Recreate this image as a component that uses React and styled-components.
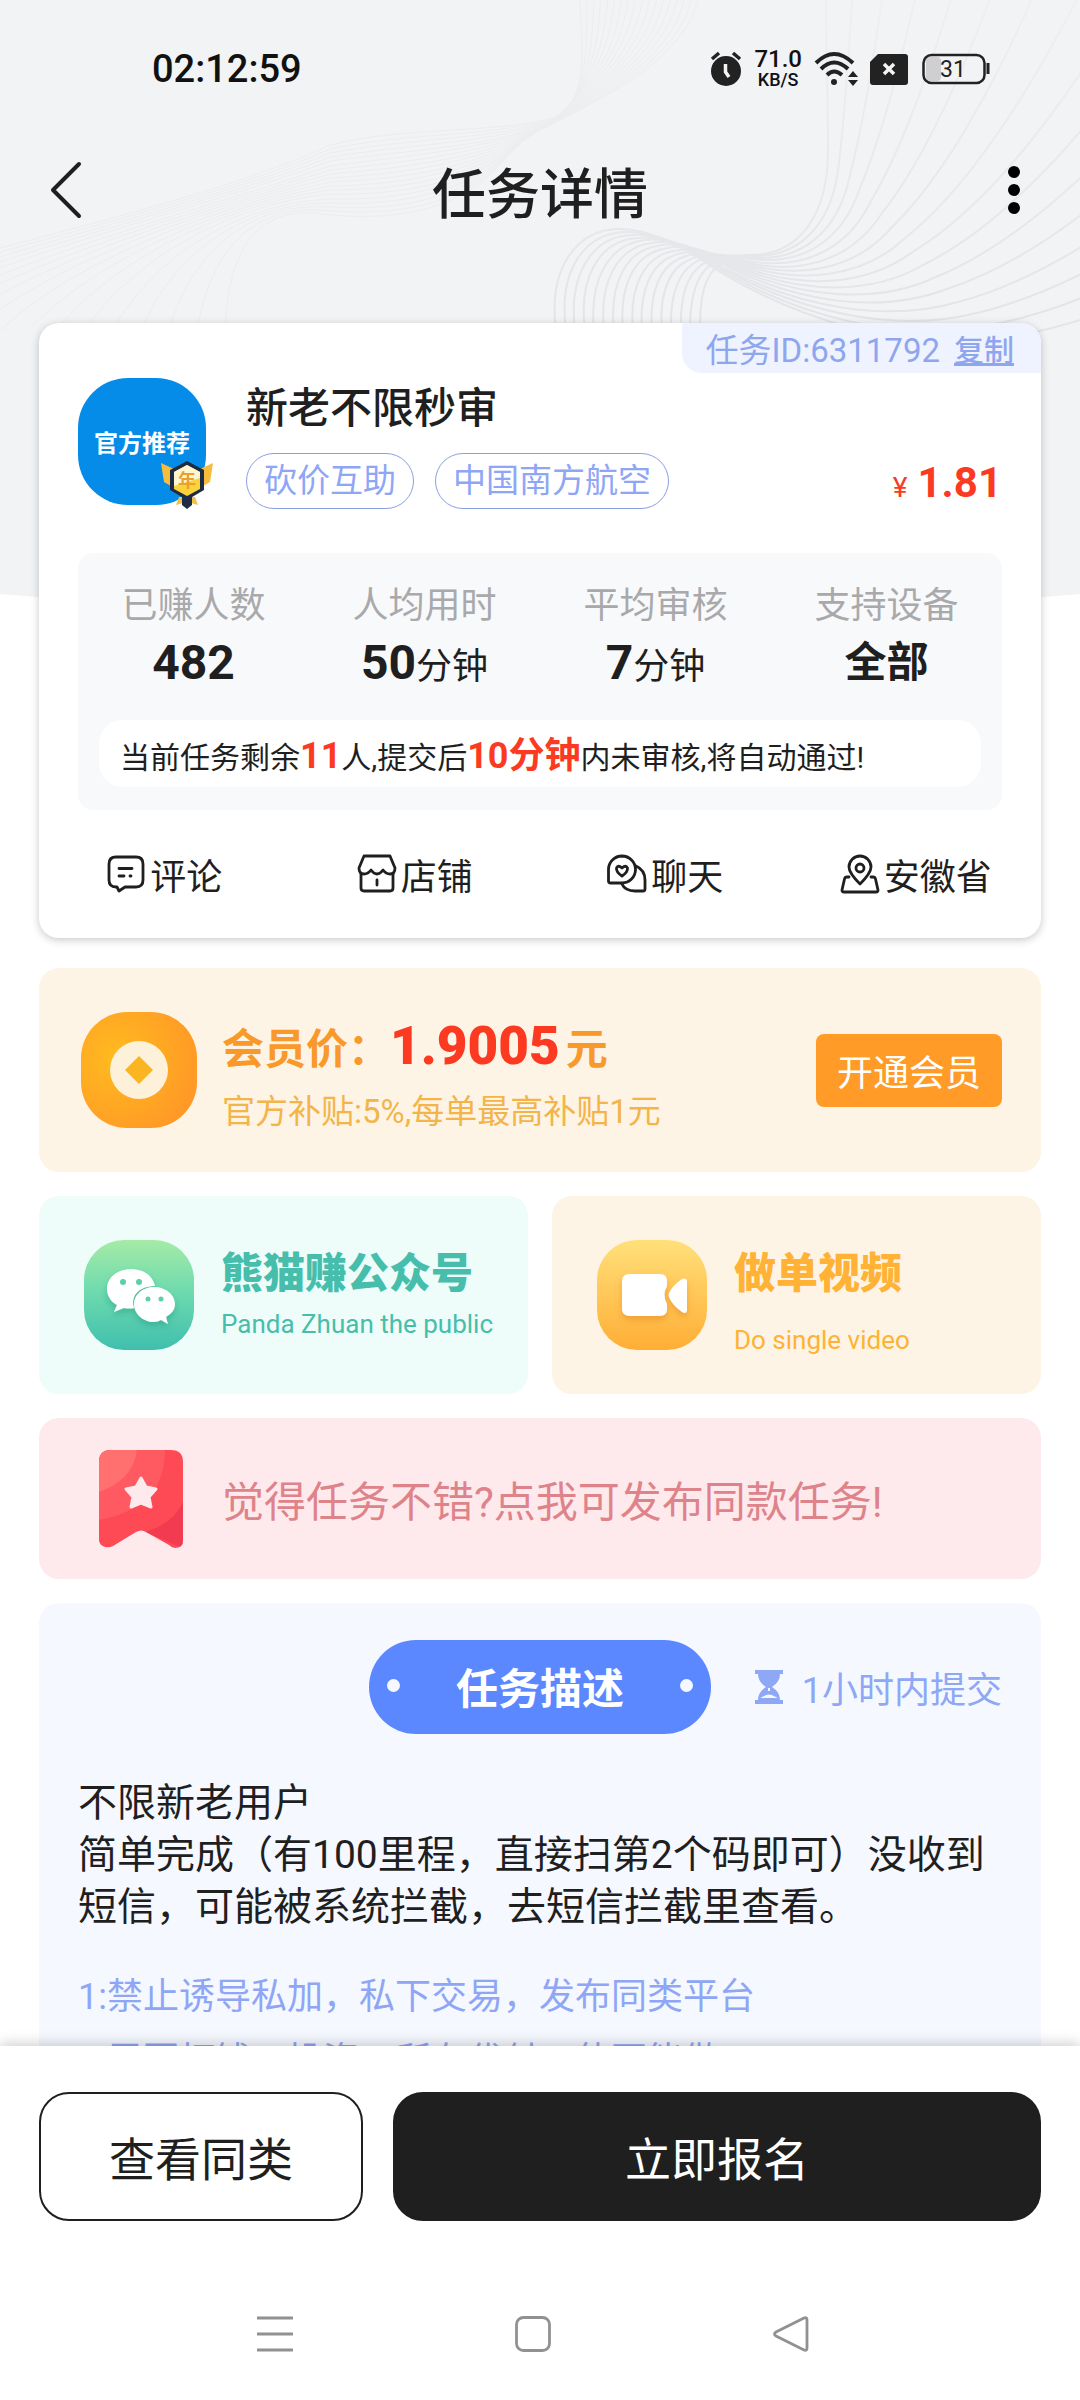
import styled, { createGlobalStyle } from "styled-components";

const GlobalStyle = createGlobalStyle`
    * {
        box-sizing: border-box;
    }

    html, body, #root {
        height: 100%;
    }

    body {
        margin: 0;
        background: #fff;
        color: #1f1f1f;
        font-family: Roboto, "Noto Sans CJK SC", sans-serif;
    }

    h1, h2, p, dl, dd, ul {
        margin: 0;
        padding: 0;
        font-weight: 400;
    }

    svg {
        display: block;
        flex: none;
    }

    button {
        margin: 0;
        padding: 0;
        border: 0;
        background: none;
        color: inherit;
        font: inherit;
        cursor: pointer;
    }
`;

const Screen = styled.div`
    position: relative;
    display: flex;
    flex-direction: column;
    height: 100vh;
    overflow: hidden;
`;

const Backdrop = styled.svg`
    position: absolute;
    top: 0;
    left: 0;
    z-index: -1;
    width: 100%;
    height: 620px;
`;

const StatusBar = styled.div`
    display: flex;
    align-items: center;
    justify-content: space-between;
    height: 138px;
    padding: 0 90px 0 152px;
    font-weight: 500;

    time {
        font-size: 38px;
        color: #111;
    }
`;

const StatusIcons = styled.div`
    display: flex;
    align-items: center;
    gap: 12px;
`;

const NetSpeed = styled.div`
    display: flex;
    flex-direction: column;
    align-items: center;
    font-size: 24px;
    line-height: 22px;
    color: #111;

    small {
        font-size: 18px;
        line-height: 20px;
    }
`;

const TopBar = styled.header`
    display: flex;
    align-items: center;
    justify-content: space-between;
    height: 104px;
    padding: 0 50px;

    h1 {
        font-size: 54px;
        font-weight: 500;
    }
`;

const IconButton = styled.button`
    display: flex;
    justify-content: ${({$end}) => $end ? 'flex-end' : 'flex-start'};
    align-items: center;
    width: 60px;
    height: 80px;
`;

const Content = styled.main`
    display: flex;
    flex: 1;
    flex-direction: column;
    gap: 24px;
    min-height: 0;
    padding: 81px 39px 0;
    overflow-y: auto;
    scrollbar-width: none;

    > * {
        flex: none;
    }
`;

const TaskCard = styled.section`
    margin-bottom: 6px;
    border-radius: 20px;
    background: #fff;
    box-shadow: 0 2px 8px rgba(0, 0, 0, 0.22);
`;

const TaskId = styled.div`
    display: flex;
    align-items: center;
    gap: 14px;
    width: fit-content;
    height: 50px;
    margin-left: auto;
    padding: 0 27px 0 24px;
    border-radius: 0 20px 0 20px;
    background: #eff3ff;
    color: #8ea6ee;
    font-size: 33px;

    button {
        font-size: 30px;
        font-weight: 500;
        text-decoration: underline;
    }
`;

const Summary = styled.div`
    display: flex;
    gap: 40px;
    padding: 5px 39px 48px;
`;

const Avatar = styled.div`
    position: relative;
    display: flex;
    align-items: center;
    justify-content: center;
    width: 128px;
    height: 127px;
    border-radius: 50px;
    background: #058ce8;
    color: #fff;
    font-size: 24px;
    font-weight: 700;
`;

const YearBadge = styled.svg`
    position: absolute;
    right: -8px;
    bottom: -4px;
`;

const SummaryText = styled.div`
    display: flex;
    flex: 1;
    flex-direction: column;
    justify-content: space-between;

    h2 {
        font-size: 42px;
        font-weight: 500;
        line-height: 62px;
    }
`;

const TagRow = styled.div`
    display: flex;
    align-items: center;
    gap: 21px;
    height: 56px;
    margin-bottom: -4px;
`;

const Tag = styled.span`
    padding: 0 17px;
    border: 1px solid #8a9fe0;
    border-radius: 28px;
    color: #8ea6f5;
    font-size: 33px;
    line-height: 54px;
`;

const Price = styled.b`
    margin-left: auto;
    padding-top: 8px;
    color: #fc3a22;
    font-size: 42px;
    line-height: 54px;

    small {
        margin-right: 10px;
        font-size: 28px;
        font-weight: 400;
    }
`;

const StatsPanel = styled.div`
    margin: 0 39px;
    padding: 26px 21px 23px;
    border-radius: 15px;
    background: #f8f9fb;
`;

const Stats = styled.dl`
    display: grid;
    grid-template-columns: repeat(4, 1fr);
    margin: 0 -21px 27px;
    text-align: center;

    dt {
        color: #a9a9ab;
        font-size: 36px;
        line-height: 54px;
    }

    dd {
        height: 60px;
        font-size: 36px;
        line-height: 60px;
    }

    b {
        font-size: 48px;
    }

    strong {
        font-size: 42px;
    }
`;

const Note = styled.p`
    height: 67px;
    padding: 0 21px;
    border-radius: 24px;
    background: #fff;
    font-size: 30px;
    line-height: 72px;
    white-space: nowrap;

    b {
        color: #fc3a22;
        font-size: 36px;
    }
`;

const Actions = styled.div`
    display: grid;
    grid-template-columns: repeat(4, 1fr);
    height: 128px;
`;

const Action = styled.button`
    display: flex;
    align-items: center;
    justify-content: center;
    gap: 4px;
    font-size: 36px;
`;

const MemberCard = styled.section`
    display: flex;
    align-items: center;
    gap: 25px;
    height: 204px;
    padding: 0 39px 0 42px;
    border-radius: 20px;
    background: #fef4e5;
`;

const MemberText = styled.div`
    flex: 1;
    padding-top: 14px;
    color: #f8992a;
    font-size: 42px;
    font-weight: 700;
    line-height: 66px;

    b {
        margin-right: 6px;
        color: #fc3a22;
        font-size: 53px;
    }

    p {
        color: #f3b54a;
        font-size: 33px;
        line-height: 58px;
    }
`;

const JoinButton = styled.button`
    width: 186px;
    height: 73px;
    border-radius: 8px;
    background: #ff9b26;
    color: #fff;
    font-size: 36px;
`;

const LinkRow = styled.div`
    display: grid;
    grid-template-columns: 1fr 1fr;
    gap: 24px;
`;

const LinkCard = styled.button`
    display: flex;
    align-items: center;
    gap: 27px;
    height: 198px;
    padding: 0 12px 0 45px;
    border-radius: 20px;
    background: ${({$bg}) => $bg};
    color: ${({$color}) => $color};
    text-align: left;
`;

const LinkText = styled.span`
    display: flex;
    flex-direction: column;
    gap: ${({$gap}) => $gap};
    height: 112px;

    b {
        font-size: 42px;
        font-weight: 900;
        line-height: 70px;
    }

    small {
        font-size: 26px;
        line-height: 30px;
    }
`;

const Notice = styled.button`
    display: flex;
    align-items: center;
    gap: 39px;
    height: 161px;
    padding: 0 60px;
    border-radius: 20px;
    background: #feeaec;
    color: #df838b;
    font-size: 42px;
`;

const Description = styled.section`
    padding: 37px 39px 60px;
    border-radius: 20px;
    background: #f5f8ff;
`;

const DescriptionHead = styled.div`
    display: grid;
    grid-template-columns: 1fr auto 1fr;
    align-items: center;
    margin-bottom: 43px;
`;

const DescriptionTitle = styled.h2`
    display: flex;
    grid-column: 2;
    align-items: center;
    justify-content: space-between;
    width: 342px;
    height: 94px;
    padding: 0 18px 4px;
    border-radius: 47px;
    background: #5c88ff;
    color: #fff;
    font-size: 42px;
    font-weight: 700;

    &::before, &::after {
        content: "";
        width: 13px;
        height: 13px;
        border-radius: 50%;
        background: #f5f8ff;
    }
`;

const Deadline = styled.div`
    display: flex;
    align-items: center;
    justify-content: flex-end;
    gap: 18px;
    color: #8ea8f6;
    font-size: 36px;
    white-space: nowrap;
`;

const Body = styled.p`
    margin-bottom: 32px;
    font-size: 39px;
    line-height: 52px;
`;

const Rules = styled.ul`
    list-style: none;
    color: #8ea6f5;
    font-size: 36px;
    line-height: 64px;
`;

const BottomBar = styled.footer`
    display: grid;
    grid-template-columns: 1fr 2fr;
    gap: 30px;
    padding: 46px 39px 95px;
    background: #fff;
    box-shadow: 0 -3px 12px rgba(0, 0, 0, 0.18);
`;

const BottomButton = styled.button`
    height: 129px;
    padding-bottom: 2px;
    border: 2px solid #1f1f1f;
    border-radius: 30px;
    background: ${({$dark}) => $dark ? '#1f1f1f' : '#fff'};
    color: ${({$dark}) => $dark ? '#fff' : '#1f1f1f'};
    font-size: 46px;
`;

const SystemNav = styled.nav`
    display: flex;
    justify-content: center;
    gap: 222px;
    padding: 0 14px 48px 0;
    background: #fff;
`;

// every line is a blend of the first and the last curve of its bundle
const blend = (from, to, count) => Array.from({length: count}, (_, i) => {
    const t = i / (count - 1);
    const p = from.map((v, k) => Math.round(v + (to[k] - v) * t));
    return `M${p.slice(0, 2).join(' ')}C${p.slice(2).join(' ')}`;
});

const strongWaves = blend(
    [556, 330, 548, 270, 575, 229, 620, 229, 650, 229, 680, 245, 720, 272, 800, 320, 900, 350, 990, 340, 1150, 320, 1350, 200, 1500, 50],
    [700, 330, 700, 305, 702, 285, 712, 272, 722, 260, 735, 255, 750, 255, 800, 255, 828, 215, 828, 150, 828, 60, 822, -100, 822, -300],
    16
);
const softWaves = blend(
    [-250, 330, -100, 260, 180, 215, 330, 145, 410, 125, 500, 135, 565, 115, 590, 80, 580, 40, 580, -10],
    [225, 330, 228, 260, 250, 200, 330, 215, 450, 225, 490, 180, 520, 140, 600, 100, 690, 60, 700, -10],
    18
);

const Waves = () => (
    <Backdrop viewBox="0 0 1080 620" preserveAspectRatio="none" aria-hidden="true">
        <defs>
            <linearGradient id="wave" gradientUnits="userSpaceOnUse" x1="0" y1="0" x2="0" y2="330">
                <stop offset="0" stopColor="#eeeff1"/>
                <stop offset="1" stopColor="#e3e4e7"/>
            </linearGradient>
        </defs>
        <path d="M0 0H1080V594Q540 640 0 594Z" fill="#f2f3f5"/>
        <g fill="none" stroke="#ecedef" strokeWidth="1">
            {softWaves.map(d => <path key={d} d={d}/>)}
        </g>
        <g fill="none" stroke="url(#wave)" strokeWidth="2">
            {strongWaves.map(d => <path key={d} d={d}/>)}
        </g>
    </Backdrop>
);

const AlarmIcon = () => (
    <svg width="32" height="36" viewBox="0 0 32 36">
        <circle cx="16" cy="20" r="15" fill="#222"/>
        <path d="M2 8L9 2M30 8L23 2" stroke="#222" strokeWidth="3.5"/>
        <path d="M15.500 13V21L19 26" fill="none" stroke="#f2f3f5" strokeWidth="3.5"/>
    </svg>
);

const WifiIcon = () => (
    <svg width="44" height="36" viewBox="0 0 44 36" fill="none" stroke="#222" strokeWidth="4">
        <path d="M2 12Q20 -6 39 12M7 18Q20 5 34 18M13 24Q20 17 28 24"/>
        <circle cx="20" cy="31" r="3" fill="#222" stroke="none"/>
        <path d="M34 26L39 20L44 26ZM34 29L39 35L44 29Z" fill="#222" stroke="none"/>
    </svg>
);

const SimIcon = () => (
    <svg width="40" height="31" viewBox="0 0 40 31">
        <path d="M8 0H35Q38 0 38 3V28Q38 31 35 31H3Q0 31 0 28V8Z" fill="#222"/>
        <path d="M14 10L24 20M24 10L14 20" stroke="#f2f3f5" strokeWidth="3.5"/>
    </svg>
);

const BatteryIcon = () => (
    <svg width="68" height="32" viewBox="0 0 68 32">
        <rect x="4" y="4" width="15" height="24" rx="4" fill="#cfcfd1"/>
        <rect x="1.500" y="2" width="61" height="28" rx="8" fill="none" stroke="#222" strokeWidth="2.500"/>
        <path d="M66 10V21" stroke="#222" strokeWidth="3"/>
        <text x="31" y="24" textAnchor="middle" fontSize="23" fontWeight="400" fill="#222">31</text>
    </svg>
);

const BackIcon = () => (
    <svg width="32" height="58" viewBox="0 0 32 58">
        <path d="M29 3L3 29L29 55" fill="none" stroke="#1f1f1f" strokeWidth="4" strokeLinecap="round" strokeLinejoin="round"/>
    </svg>
);

const MoreIcon = () => (
    <svg width="32" height="52" viewBox="0 0 32 52">
        <circle cx="16" cy="8" r="6"/>
        <circle cx="16" cy="26" r="6"/>
        <circle cx="16" cy="44" r="6"/>
    </svg>
);

const LineIcon = ({children}) => (
    <svg width="40" height="40" viewBox="0 0 40 40" fill="none" stroke="#1f1f1f" strokeWidth="2.8" strokeLinecap="round" strokeLinejoin="round">
        {children}
    </svg>
);

const CommentIcon = () => (
    <LineIcon>
        <path d="M10 3H30Q37 3 37 10V26Q37 33 30 33H19L13 37L11 33H10Q3 33 3 26V10Q3 3 10 3Z"/>
        <path d="M13 14.500H26M13 22H18M24 22H25"/>
    </LineIcon>
);

const ShopIcon = () => (
    <LineIcon>
        <path d="M7 2H33L38 14Q38 20 33 20Q29 20 26 16Q23 20 20 20Q17 20 14 16Q11 20 7 20Q2 20 2 14Z"/>
        <path d="M4 20V34Q4 37 7 37H33Q36 37 36 34V20M20 26V31"/>
    </LineIcon>
);

const ChatIcon = () => (
    <LineIcon>
        <path d="M15 2A13.500 13.500 0 0 1 15 29H3.500Q1.500 29 1.500 27V15.500A13.500 13.500 0 0 1 15 2Z"/>
        <path d="M15 22Q9 18 9.500 14Q11 10.500 15 14Q19 10.500 20.500 14Q21 18 15 22Z"/>
        <path d="M29 12Q38 16 38 26V35Q38 37 36 37H28Q18 37 15 30"/>
    </LineIcon>
);

const PlaceIcon = () => (
    <LineIcon>
        <path d="M20 30Q9 19 9 13A11 11 0 0 1 31 13Q31 19 20 30Z"/>
        <circle cx="20" cy="14" r="4"/>
        <path d="M9 23H7Q5 23 4.500 25L2 36Q2 38 4 38H36Q38 38 38 36L35.500 25Q35 23 33 23H31"/>
    </LineIcon>
);

const CoinIcon = () => (
    <svg width="116" height="116" viewBox="0 0 116 116">
        <defs>
            <radialGradient id="coin" cx="0.3" cy="0.4" r="0.8">
                <stop offset="0" stopColor="#ffbb1f"/>
                <stop offset="1" stopColor="#ff9627"/>
            </radialGradient>
        </defs>
        <rect width="116" height="116" rx="46" fill="url(#coin)"/>
        <circle cx="58" cy="58" r="29" fill="#fdf1d9"/>
        <path d="M58 44L72 58L58 72L44 58Z" fill="#fcb522"/>
    </svg>
);

const WechatIcon = () => (
    <svg width="110" height="110" viewBox="0 0 110 110">
        <defs>
            <linearGradient id="wechat" x2="0" y2="1">
                <stop offset="0" stopColor="#a5eba6"/>
                <stop offset="0.45" stopColor="#70dbae"/>
                <stop offset="1" stopColor="#40bfae"/>
            </linearGradient>
            <filter id="soft" x="-20%" y="-20%" width="140%" height="150%">
                <feDropShadow dx="0" dy="4" stdDeviation="3" floodColor="#229e84" floodOpacity="0.5"/>
            </filter>
        </defs>
        <rect width="110" height="110" rx="40" fill="url(#wechat)"/>
        <g fill="#fff" filter="url(#soft)">
            <path d="M47 29C33 29 23 38 23 49C23 56 27 62 33 65L30 72L40 68Q46 69 50 68C46 55 56 46 71 46C69 36 60 29 47 29Z"/>
            <path d="M70 47C58 47 50 55 50 64C50 74 59 82 70 82Q74 82 77 80L84 84L82 77C87 74 91 70 91 64C91 55 82 47 70 47Z"/>
        </g>
        <g fill="#5fceae">
            <circle cx="39" cy="42" r="3"/>
            <circle cx="55" cy="42" r="3"/>
            <circle cx="64" cy="59" r="2.500"/>
            <circle cx="77" cy="59" r="2.500"/>
        </g>
    </svg>
);

const VideoIcon = () => (
    <svg width="110" height="110" viewBox="0 0 110 110">
        <defs>
            <linearGradient id="video" x2="0" y2="1">
                <stop offset="0" stopColor="#ffe07a"/>
                <stop offset="1" stopColor="#ffae36"/>
            </linearGradient>
            <filter id="glow" x="-20%" y="-20%" width="140%" height="150%">
                <feDropShadow dx="0" dy="4" stdDeviation="3" floodColor="#e0851a" floodOpacity="0.5"/>
            </filter>
        </defs>
        <rect width="110" height="110" rx="40" fill="url(#video)"/>
        <g fill="#fff" filter="url(#glow)">
            <path d="M33 34H63Q70 34 70 41V46Q65 55 70 64V69Q70 76 63 76H33Q25 76 25 69V41Q25 34 33 34Z"/>
            <path d="M85 39Q90 37 90 42V69Q90 75 85 72Q75 65 72 57Q71 55 72 53Q76 45 85 39Z"/>
        </g>
    </svg>
);

const RibbonIcon = () => (
    <svg width="84" height="98" viewBox="0 0 84 98">
        <defs>
            <clipPath id="ribbon">
                <path d="M12 0H72Q84 0 84 12V90Q84 98 76 98Q73 98 70 95L47 82Q42 79 37 82L14 96Q10 98 6 97Q0 95 0 90V12Q0 0 12 0Z"/>
            </clipPath>
        </defs>
        <g clipPath="url(#ribbon)">
            <rect width="84" height="98" fill="#fe4a55"/>
            <path d="M0 0H66Q66 58 0 70Z" fill="#ff5a61"/>
            <path d="M0 0H38Q34 30 0 42Z" fill="#ff706f"/>
            <path d="M84 52Q74 74 46 82L84 98Z" fill="#f23b50"/>
        </g>
        <path d="M42 28L47 37L57 39L50 47L52 57L42 53L32 57L34 47L27 39L37 37Z" fill="#feeaec" stroke="#feeaec" strokeWidth="3" strokeLinejoin="round"/>
    </svg>
);

const HourglassIcon = () => (
    <svg width="30" height="34" viewBox="0 0 30 34">
        <path d="M1 0H29V4H1ZM1 30H29V34H1ZM4 4H26Q26 12 18 17Q26 22 26 30H4Q4 22 12 17Q4 12 4 4Z" fill="#8ea8f6"/>
        <path d="M15 18V21M10 27Q15 24 20 27Z" fill="#f5f8ff" stroke="#f5f8ff" strokeWidth="2"/>
    </svg>
);

const Badge = () => (
    <YearBadge width="54" height="48" viewBox="0 0 54 48">
        <path d="M1 2L14 8L16 28L4 21ZM53 2L40 8L38 28L50 21Z" fill="#f6bd3c"/>
        <path d="M19 36L16 44L23 42L27 48L31 42L38 44L35 36Z" fill="#f0c04a"/>
        <path d="M22 34H32V44L27 48L22 44Z" fill="#1d2b45"/>
        <path d="M27 0L44 9V29L27 39L10 29V9Z" fill="#1d2b45"/>
        <path d="M27 4L40 11V28L27 35L14 28V11Z" fill="#fbd23c"/>
        <path d="M27 4L40 11V17L14 25V11Z" fill="#fff6cf"/>
        <text x="27" y="26" textAnchor="middle" fontSize="18" fontWeight="700" fill="#e9a02c">年</text>
    </YearBadge>
);

const NavIcon = ({label, children}) => (
    <button aria-label={label}>
        <svg width="36" height="36" viewBox="0 0 36 36" fill="none" stroke="#919191" strokeWidth="2.8">
            {children}
        </svg>
    </button>
);

const actions = [
    {label: '评论', Icon: CommentIcon},
    {label: '店铺', Icon: ShopIcon},
    {label: '聊天', Icon: ChatIcon},
    {label: '安徽省', Icon: PlaceIcon},
];

const tags = ['砍价互助', '中国南方航空'];

const rules = [
    '1:禁止诱导私加，私下交易，发布同类平台',
    '2:需要打钱，投资，所有代付，使不能做',
];

const App = () => (
    <>
        <GlobalStyle/>
        <Screen>
            <Waves/>
            <StatusBar>
                <time>02:12:59</time>
                <StatusIcons>
                    <AlarmIcon/>
                    <NetSpeed><span>71.0</span><small>KB/S</small></NetSpeed>
                    <WifiIcon/>
                    <SimIcon/>
                    <BatteryIcon/>
                </StatusIcons>
            </StatusBar>
            <TopBar>
                <IconButton aria-label="返回"><BackIcon/></IconButton>
                <h1>任务详情</h1>
                <IconButton $end aria-label="更多"><MoreIcon/></IconButton>
            </TopBar>

            <Content>
                <TaskCard>
                    <TaskId>任务ID:6311792<button>复制</button></TaskId>
                    <Summary>
                        <Avatar>官方推荐<Badge/></Avatar>
                        <SummaryText>
                            <h2>新老不限秒审</h2>
                            <TagRow>
                                {tags.map(tag => <Tag key={tag}>{tag}</Tag>)}
                                <Price><small>¥</small>1.81</Price>
                            </TagRow>
                        </SummaryText>
                    </Summary>
                    <StatsPanel>
                        <Stats>
                            <div><dt>已赚人数</dt><dd><b>482</b></dd></div>
                            <div><dt>人均用时</dt><dd><b>50</b>分钟</dd></div>
                            <div><dt>平均审核</dt><dd><b>7</b>分钟</dd></div>
                            <div><dt>支持设备</dt><dd><strong>全部</strong></dd></div>
                        </Stats>
                        <Note>当前任务剩余<b>11</b>人,提交后<b>10分钟</b>内未审核,将自动通过!</Note>
                    </StatsPanel>
                    <Actions>
                        {actions.map(({label, Icon}) => <Action key={label}><Icon/>{label}</Action>)}
                    </Actions>
                </TaskCard>

                <MemberCard>
                    <CoinIcon/>
                    <MemberText>
                        会员价：<b>1.9005</b>元
                        <p>官方补贴:5%,每单最高补贴1元</p>
                    </MemberText>
                    <JoinButton>开通会员</JoinButton>
                </MemberCard>

                <LinkRow>
                    <LinkCard $bg="#eefcfa" $color="#46beab">
                        <WechatIcon/>
                        <LinkText $gap="0">
                            <b>熊猫赚公众号</b>
                            <small>Panda Zhuan the public</small>
                        </LinkText>
                    </LinkCard>
                    <LinkCard $bg="#fef4e5" $color="#ffb235">
                        <VideoIcon/>
                        <LinkText $gap="16px">
                            <b>做单视频</b>
                            <small>Do single video</small>
                        </LinkText>
                    </LinkCard>
                </LinkRow>

                <Notice><RibbonIcon/>觉得任务不错?点我可发布同款任务!</Notice>

                <Description>
                    <DescriptionHead>
                        <DescriptionTitle>任务描述</DescriptionTitle>
                        <Deadline><HourglassIcon/>1小时内提交</Deadline>
                    </DescriptionHead>
                    <Body>
                        不限新老用户<br/>
                        简单完成（有100里程，直接扫第2个码即可）没收到短信，可能被系统拦截，去短信拦截里查看。
                    </Body>
                    <Rules>
                        {rules.map(rule => <li key={rule}>{rule}</li>)}
                    </Rules>
                </Description>
            </Content>

            <BottomBar>
                <BottomButton>查看同类</BottomButton>
                <BottomButton $dark>立即报名</BottomButton>
            </BottomBar>
            <SystemNav>
                <NavIcon label="菜单"><path d="M0 2H36M0 18H36M0 34H36"/></NavIcon>
                <NavIcon label="主页"><rect x="1.500" y="1.500" width="33" height="33" rx="7"/></NavIcon>
                <NavIcon label="后退"><path d="M31 2L3 16Q0 18 3 20L31 34Q34 35 34 32V4Q34 1 31 2Z"/></NavIcon>
            </SystemNav>
        </Screen>
    </>
);

export default App;
